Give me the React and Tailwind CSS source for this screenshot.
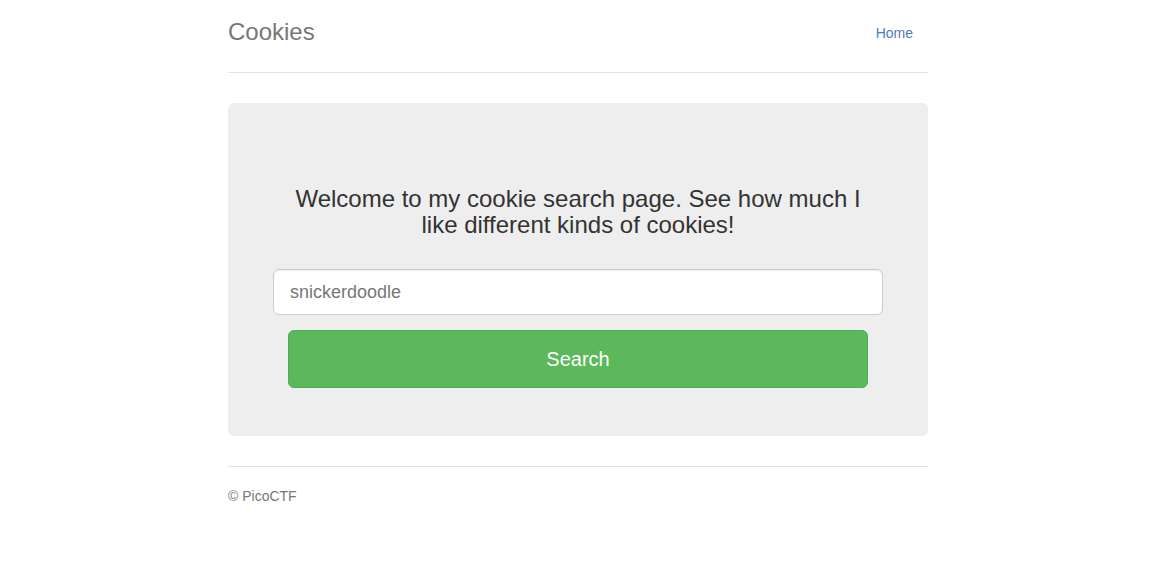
export default function App() {
  return (
    <div className="min-h-[585px] bg-white font-['Liberation_Sans',Arial,sans-serif] text-[14px] text-[#333]">
      <div className="flex justify-center pl-[4px] pt-[12px]">
        <div className="w-[700px]">
          <div className="flex items-center justify-between border-b border-[#e5e5e5] pb-[20px]">
            <h3 className="text-[24px] leading-[40px] text-[#777]">Cookies</h3>
            <nav className="flex">
              <a className="block px-[15px] pt-[11px] pb-[9px] leading-[20px] text-[14px] text-[#4a7dbf]" href="#">Home</a>
            </nav>
          </div>
          <div className="mt-[30px] rounded-[6px] bg-[#eeeeee] px-[60px] pb-[48px] pt-[83px] text-center">
            <h3 className="text-[24px] leading-[26px] text-[#333]">
              Welcome to my cookie search page. See how much I like different kinds of cookies!
            </h3>
            <div className="-mx-[15px] mt-[31px]">
              <input
                className="block h-[46px] w-full rounded-[6px] border border-[#ccc] bg-white px-[16px] text-[18px] text-[#555] placeholder:text-[#777] shadow-[inset_0_1px_1px_rgba(0,0,0,0.075)] outline-none"
                placeholder="snickerdoodle"
              />
            </div>
            <button className="mt-[15px] block h-[58px] w-full rounded-[6px] border border-[#4cae4c] bg-[#5cb85c] text-[20px] text-white">
              Search
            </button>
          </div>
          <footer className="mt-[30px] border-t border-[#e5e5e5] pt-[19px] text-[14px] leading-[20px] text-[#777]">
            © PicoCTF
          </footer>
        </div>
      </div>
    </div>
  );
}
